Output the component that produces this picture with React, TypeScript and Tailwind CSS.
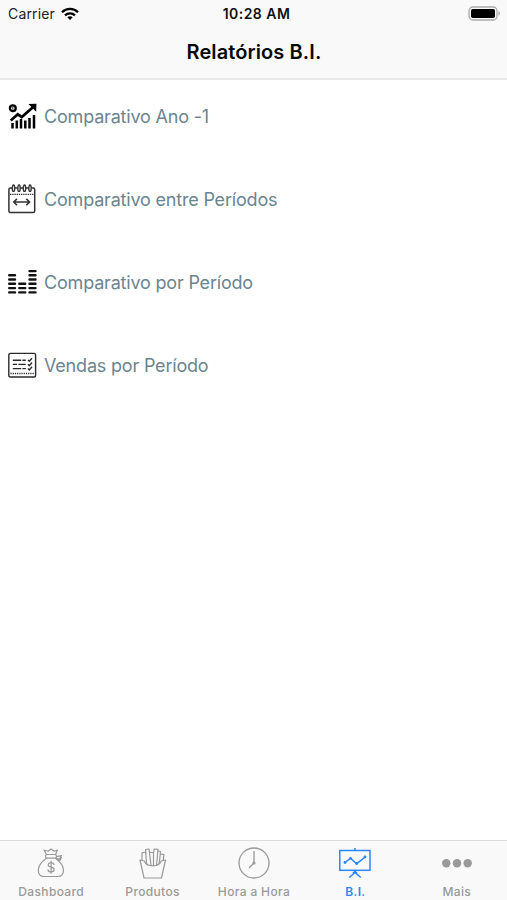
import type { ReactNode } from "react";
import clsx from "clsx";

interface ReportItem {
    label: string;
    icon: ReactNode;
}

interface TabItem {
    label: string;
    icon: ReactNode;
    active?: boolean;
}

function GrowthIcon() {
    return (
        <svg width="30" height="30" viewBox="0 0 30 30" fill="none" stroke="#000">
            <circle cx="5.8" cy="7.2" r="2.9" strokeWidth="2.3" />
            <path d="M5.8 5.6v3.2" strokeWidth=".8" />
            <path d="M3.8 19.6l7-6.3 4 2.8L26.2 6" strokeWidth="2.7" />
            <path d="M21.4 3l8-.2-.2 8z" fill="#000" stroke="none" />
            <path d="M5.500 27.500v-5.500M9.800 27.500v-8M14 27.500v-9.500M18.300 27.500v-8M22.500 27.500v-10.500M27 27.500V14" strokeWidth="2.500" />
        </svg>
    );
}

function CalendarIcon() {
    return (
        <svg width="30" height="30" viewBox="0 0 30 30" fill="none" stroke="#333" strokeWidth="1.5">
            <rect x="1.9" y="4" width="25.8" height="24.4" rx="1.5" />
            <path d="M3 10.4h24" strokeDasharray="1.4 .8" strokeWidth="1.2" />
            {[6.5, 12, 17.5, 23].map(x => (
                <ellipse key={x} cx={x} cy="4.2" rx="1.2" ry="3.2" fill="#fff" strokeWidth="1.4" />
            ))}
            <path d="M6.8 18h15.8M10 14.9L6.700 18l3.300 3.100M19.300 14.900l3.300 3.100-3.300 3.100" />
        </svg>
    );
}

function EqualizerIcon() {
    return (
        <svg width="30" height="30" viewBox="0 0 30 30" fill="none" stroke="#111" strokeWidth="2.4" strokeLinecap="round">
            <path d="M2.2 25.4h5.8M2.2 21.1h5.8M2.2 16.8h5.8M2.2 12.5h5.8M2.2 8.3h5.8" />
            <path d="M12.3 25.4h5.9M12.3 21.1h5.9M12.3 16.8h5.9" />
            <path d="M22.5 25.4h6M22.5 21.1h6M22.5 16.8h6M22.5 12.5h6M22.5 8.3h6M22.5 4.1h6" />
        </svg>
    );
}

function ChecklistIcon() {
    return (
        <svg width="30" height="30" viewBox="0 0 30 30" fill="none" stroke="#2a2a2a" strokeWidth="1.4">
            <rect x="1.8" y="3.4" width="26.8" height="23.6" rx="1.5" />
            <path d="M3.5 23.6h24" strokeDasharray="1.2 1" strokeWidth="1.5" />
            <path d="M5.8 10.2h8.4M15.4 10.2h3.4M5.8 14.4h4.4M11.4 14.4h7.4M5.8 18.6h8.4M15.4 18.6h3.4" />
            <path d="M21 10l1.3 1.3L25 8.2M21 14.3l1.3 1.3 2.7-3.1M21 18.6l1.3 1.3 2.7-3.1" />
        </svg>
    );
}

function MoneyBagIcon() {
    return (
        <svg width="32" height="32" viewBox="0 0 32 32" fill="none" stroke="currentColor" strokeWidth="1.2" strokeLinecap="round" strokeLinejoin="round">
            <path d="M11.5 11.2C6 15 3.3 19 3.3 23.3c0 4.2 2.2 6.200 5.700 6.200h13.500c3.900 0 6-2.200 6-6.200 0-4.800-3.300-8.600-8-12.100" />
            <path d="M11.5 7.5L9 3l4 1.2L16 2l3.200 2.200L22.500 3l-2 4.500" />
            <rect x="10.5" y="7.5" width="11" height="3.7" rx="1.8" />
            <path d="M21.5 9.700l5-1.200-1.800 3-2.900.4M21.500 11.200l3.500 2.300 1.300-3" />
            <path d="M19 17.500c-.3-1.200-1.300-1.800-2.900-1.800-1.800 0-2.900.8-2.900 2.200 0 3.200 6 1.300 6 4.600 0 1.500-1.200 2.400-3.100 2.400-1.800 0-2.900-.8-3.100-2.100M16.100 14.200v12" />
        </svg>
    );
}

function FriesIcon() {
    return (
        <svg width="32" height="32" viewBox="0 0 32 32" fill="none" stroke="currentColor" strokeWidth="1.2" strokeLinecap="round" strokeLinejoin="round">
            <path d="M3 13l4 18h17.500l4-18-4.300 1c-1.200 3-3.900 4.800-8.300 4.800S8.400 17 7.300 14z" />
            <path d="M5 13V5.800l3.600-.8 1 11.500M9 7l-.4-4.500L12 2l2 16" />
            <path d="M13 5.500h3.500v13M16.500 6l.6-4 3.900.3-1.500 16" />
            <path d="M20.700 4l2.800.5-1.300 12M23.500 7l3.500.6-.8 5.800" />
        </svg>
    );
}

function ClockIcon() {
    return (
        <svg width="32" height="32" viewBox="0 0 32 32" fill="none" stroke="currentColor" strokeWidth="1.3">
            <circle cx="16" cy="16" r="15" />
            <path d="M16 4v12l-5 5" />
            <circle cx="16" cy="16" r="1.6" fill="currentColor" stroke="none" />
        </svg>
    );
}

function BoardIcon() {
    return (
        <svg width="32" height="32" viewBox="0 0 32 32" fill="none" stroke="currentColor" strokeWidth="1.5">
            <rect x=".8" y="3.5" width="30.2" height="19.8" />
            <path d="M16 1v2.500M16 23.300v2.700M16 25.500l-5.800 5M16 25.500l5.800 5" />
            <path d="M14 26.500l2-2 2 2" strokeWidth="1.8" />
            <path d="M6 15.500l5.500-4.300 6.200 5.500 8.500-6.700" />
            <g fill="currentColor" stroke="none">
                <circle cx="6" cy="15.5" r="1.4" />
                <circle cx="11.5" cy="11.3" r="1.4" />
                <circle cx="17.7" cy="16.5" r="1.4" />
                <circle cx="26" cy="10" r="1.4" />
            </g>
        </svg>
    );
}

function MoreIcon() {
    return (
        <svg width="32" height="32" viewBox="0 0 32 32" fill="currentColor">
            <circle cx="5.300" cy="16.300" r="4.200" />
            <circle cx="16" cy="16.300" r="4.200" />
            <circle cx="26.700" cy="16.300" r="4.200" />
        </svg>
    );
}

const REPORTS: ReportItem[] = [
    { label: "Comparativo Ano -1", icon: <GrowthIcon /> },
    { label: "Comparativo entre Períodos", icon: <CalendarIcon /> },
    { label: "Comparativo por Período", icon: <EqualizerIcon /> },
    { label: "Vendas por Período", icon: <ChecklistIcon /> },
];

const TABS: TabItem[] = [
    { label: "Dashboard", icon: <MoneyBagIcon /> },
    { label: "Produtos", icon: <FriesIcon /> },
    { label: "Hora a Hora", icon: <ClockIcon /> },
    { label: "B.I.", icon: <BoardIcon />, active: true },
    { label: "Mais", icon: <MoreIcon /> },
];

function StatusBar() {
    return (
        <div className="grid grid-cols-3 items-center h-[27px] pl-2 pr-1.5 text-[14px] text-[#222]">
            <div className="flex items-center gap-1.5">
                <span className="tracking-[0.15px]">Carrier</span>
                <svg width="18" height="14" viewBox="0 0 18 14" fill="none" stroke="#000" strokeWidth="2.3">
                    <path d="M1 5.200C5.500.7 12.500.7 17 5.200" />
                    <path d="M4 8.400c2.800-2.800 7.200-2.800 10 0" />
                    <path d="M9 13l-2.700-2.800c1.500-1.400 3.900-1.400 5.400 0z" fill="#000" stroke="none" />
                </svg>
            </div>
            <span className="pl-1 text-center font-semibold tracking-[0.45px] text-[#111] whitespace-nowrap">10:28 AM</span>
            <div className="flex justify-end">
                <svg width="33" height="15" viewBox="0 0 33 15" fill="none">
                    <rect x="1" y="1" width="28" height="13" rx="3.8" stroke="#aaa" strokeWidth="1.3" />
                    <rect x="3" y="3" width="24" height="9" rx="1.8" fill="#000" />
                    <path d="M30.500 5.300c1.700.5 1.700 3.900 0 4.400z" fill="#999" />
                </svg>
            </div>
        </div>
    );
}

export default function App() {
    return (
        <div className="flex flex-col h-screen bg-white font-['Inter','Liberation_Sans',sans-serif] overflow-hidden">

            {/* Cabeçalho */}
            <header className="h-20 shrink-0 bg-[#f9f9f9] border-b-2 border-[#e9e9e9]">
                <StatusBar />
                <h1 className="pl-px text-center text-[20px] leading-[51px] font-semibold tracking-[0.1px] text-[#080808]">Relatórios B.I.</h1>
            </header>

            {/* Lista de relatórios */}
            <ul className="flex flex-col flex-1 gap-[11px]">
                {REPORTS.map(r => (
                    <li key={r.label} className="flex items-center gap-[7px] h-[72px] pl-[7px]">
                        {r.icon}
                        <span className="text-[18px] tracking-[-0.19px] text-[#6b8590]">{r.label}</span>
                    </li>
                ))}
            </ul>

            {/* Navegação inferior */}
            <nav className="grid grid-cols-5 h-[60px] shrink-0 bg-[#f9f9f9] border-t border-[#dcdcdc]">
                {TABS.map(t => (
                    <button
                        key={t.label}
                        type="button"
                        className={clsx(
                            "flex flex-col items-center pl-px pt-1.5 text-[12px] font-medium tracking-[0.35px]",
                            t.active ? "text-[#2b87f5]" : "text-[#999]"
                        )}
                    >
                        {t.icon}
                        <span className={clsx("mt-[5px] leading-4", t.active && "font-semibold")}>{t.label}</span>
                    </button>
                ))}
            </nav>
        </div>
    );
}
